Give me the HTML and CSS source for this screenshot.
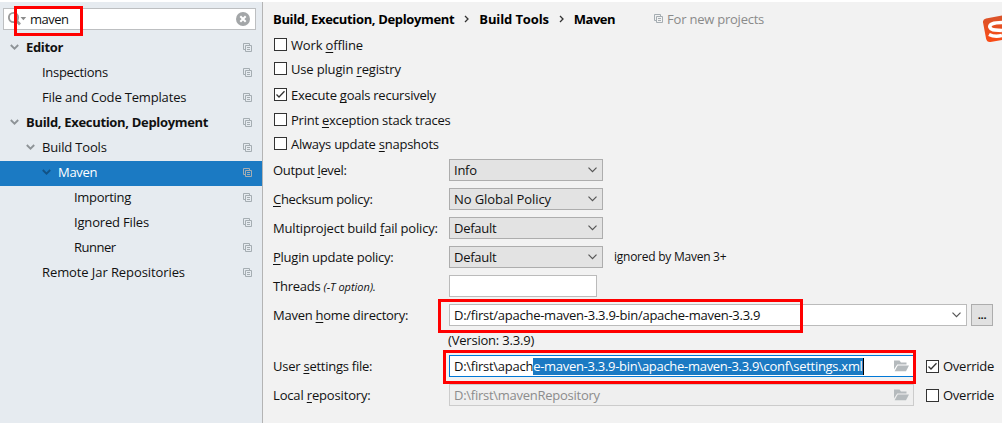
FILE: index.html
```
<!DOCTYPE html>
<html lang="en">
<head>
<meta charset="utf-8">
<title>Settings</title>
<link rel="stylesheet" href="styles.css">
</head>
<body>
<svg class="defs" width="0" height="0">
  <symbol id="copy" viewBox="0 0 9 9"><path d="M2.5 6.5H.5V.5H6.5V2.5M2.5 2.5H8.5V8.5H2.5ZM4 4.5H7M4 6.5H7" fill="none" stroke="currentColor"/></symbol>
  <symbol id="chev" viewBox="0 0 9 6"><path d="M.8 1L4.5 4.6L8.2 1" fill="none" stroke="currentColor" stroke-width="1.9"/></symbol>
  <symbol id="arrow" viewBox="0 0 9 6"><path d="M.5 .7L4.5 4.7L8.5 .7" fill="none" stroke="currentColor" stroke-width="1.2"/></symbol>
  <symbol id="check" viewBox="0 0 11 11"><path d="M1.5 5.5L4 8L9.5 2.2" fill="none" stroke="currentColor" stroke-width="1.3"/></symbol>
  <symbol id="folder" viewBox="0 0 15 12"><path d="M0 9.5V.5H5.5L7 2.5H12.5V4.5H3.2Z" fill="currentColor"/><path d="M3.8 5.5H15L12 11.3H.6Z" fill="currentColor"/></symbol>
</svg>
<div class="window">
  <aside class="sidebar">
    <div class="search">
      <svg class="magnifier" width="20" height="16" viewBox="0 0 20 16"><circle cx="5.500" cy="6.500" r="4.600" fill="none" stroke="#9a9a9a" stroke-width="1.900"/><path d="M8.8 10L12 13.500" stroke="#9a9a9a" stroke-width="2.600"/><path d="M12.500 6H18.2L15.4 9.200Z" fill="#8c8c8c"/></svg>
      <span class="query">maven</span>
      <svg class="clear" width="14" height="14" viewBox="0 0 14 14"><circle cx="7" cy="7" r="7" fill="#a3a6a8"/><path d="M4.3 4.3L9.7 9.7M9.7 4.3L4.3 9.7" stroke="#fff" stroke-width="2"/></svg>
      <div class="mark mark-search"></div>
    </div>
    <nav class="tree">
      <div class="node l0"><svg class="chev"><use href="#chev"/></svg><span class="editor">Editor</span><svg class="copy"><use href="#copy"/></svg></div>
      <div class="node l1 leaf"><span class="tight">Inspections</span><svg class="copy"><use href="#copy"/></svg></div>
      <div class="node l1 leaf"><span>File and Code Templates</span><svg class="copy"><use href="#copy"/></svg></div>
      <div class="node l0"><svg class="chev"><use href="#chev"/></svg><span>Build, Execution, Deployment</span><svg class="copy"><use href="#copy"/></svg></div>
      <div class="node l1"><svg class="chev"><use href="#chev"/></svg><span>Build Tools</span><svg class="copy"><use href="#copy"/></svg></div>
      <div class="node l2 selected"><svg class="chev"><use href="#chev"/></svg><span class="tight">Maven</span><svg class="copy"><use href="#copy"/></svg></div>
      <div class="node l3 leaf"><span class="tight">Importing</span><svg class="copy"><use href="#copy"/></svg></div>
      <div class="node l3 leaf"><span>Ignored Files</span><svg class="copy"><use href="#copy"/></svg></div>
      <div class="node l3 leaf"><span class="runner">Runner</span><svg class="copy"><use href="#copy"/></svg></div>
      <div class="node l1 leaf"><span class="loose">Remote Jar Repositories</span><svg class="copy"><use href="#copy"/></svg></div>
    </nav>
  </aside>
  <main class="content">
    <header class="crumbs">
      <b class="c-build">Build, Execution, Deployment</b>
      <svg class="sep" viewBox="0 0 5 8"><path d="M1 1L4 4L1 7" fill="none" stroke="#333" stroke-width="1.3"/></svg>
      <b class="c-tools">Build Tools</b>
      <svg class="sep" viewBox="0 0 5 8"><path d="M1 1L4 4L1 7" fill="none" stroke="#333" stroke-width="1.3"/></svg>
      <b class="c-maven">Maven</b>
      <span class="scope"><svg class="copy"><use href="#copy"/></svg>For new projects</span>
      <svg class="logo" width="19" height="28" viewBox="0 0 19 28"><defs><linearGradient id="lg" x1="0" y1="0" x2="0" y2="1"><stop offset="0" stop-color="#d9532a"/><stop offset="1" stop-color="#fa4c16"/></linearGradient></defs><path d="M19 .5L3 3.500Q-.5 4.500 0 7.500L3 23.500Q4 27.500 7.500 27L19 25Z" fill="url(#lg)"/><path d="M19 7.500C10 7.500 6 9.500 7 12.500S13 15 19 15.500M19 20.500Q12 22.500 6 19.500" fill="none" stroke="#fff" stroke-width="3.600"/></svg>
    </header>
    <section class="checks">
      <label class="check"><i class="box"></i><span class="loose">Work <u>o</u>ffline</span></label>
      <label class="check"><i class="box"></i><span class="loose">Use plugin <u>r</u>egistry</span></label>
      <label class="check low"><i class="box"><svg><use href="#check"/></svg></i><span>Execute <u>g</u>oals recursively</span></label>
      <label class="check"><i class="box"></i><span>Print <u>e</u>xception stack traces</span></label>
      <label class="check"><i class="box"></i><span>Always update <u>s</u>napshots</span></label>
    </section>
    <section class="form">
      <div class="row"><span class="label tight">Output <u>l</u>evel:</span><div class="select">Info<svg class="arrow"><use href="#arrow"/></svg></div></div>
      <div class="row"><span class="label tight"><u>C</u>hecksum policy:</span><div class="select"><span class="policy">No Global Policy</span><svg class="arrow"><use href="#arrow"/></svg></div></div>
      <div class="row"><span class="label multi">Multiproject build <u>f</u>ail policy:</span><div class="select">Default<svg class="arrow"><use href="#arrow"/></svg></div></div>
      <div class="row"><span class="label"><u>P</u>lugin update policy:</span><div class="select">Default<svg class="arrow"><use href="#arrow"/></svg></div><span class="note">ignored by Maven 3+</span></div>
      <div class="row"><span class="label">Threads <em>(-T option).</em></span><div class="field threads"></div></div>
      <div class="row"><span class="label">Maven <u>h</u>ome directory:</span><div class="field home">D:/first/apache-maven-3.3.9-bin/apache-maven-3.3.9<svg class="arrow"><use href="#arrow"/></svg><div class="mark mark-home"></div></div><div class="browse">...</div></div>
      <div class="version">(Version: 3.3.9)</div>
      <div class="row"><span class="label">User <u>s</u>ettings file:</span><div class="field path focused"><span class="head">D:\first\apach</span><span class="selection">e-maven-3.3.9-bin\apache-maven-3.3.9\conf\settings.xml</span><svg class="folder"><use href="#folder"/></svg><div class="mark mark-user"></div></div><label class="override"><i class="box"><svg><use href="#check"/></svg></i><span>Override</span></label></div>
      <div class="row"><span class="label loose">Local <u>r</u>epository:</span><div class="field path disabled">D:\first\mavenRepository<svg class="folder"><use href="#folder"/></svg></div><label class="override"><i class="box"></i><span>Override</span></label></div>
    </section>
  </main>
</div>
</body>
</html>
```
FILE: styles.css
```
* { box-sizing: border-box; }
body {
  margin: 0;
  width: 1002px;
  height: 423px;
  overflow: hidden;
  background: #fff;
  color: #111;
  font: 13px/18px "Open Sans", "Noto Sans", sans-serif;
  letter-spacing: -0.25px;
  white-space: nowrap;
}
.defs { position: absolute; }
svg { flex: none; display: block; }
u { text-decoration-thickness: 1px; text-underline-offset: 2px; text-decoration-skip-ink: none; }
.tight { letter-spacing: -0.32px; }
.loose { letter-spacing: -0.16px; }
.multi { letter-spacing: -0.19px; }

.window { display: flex; height: 421px; margin-top: 2px; }
.sidebar { width: 263px; flex: none; background: #e6ebf0; border-right: 1px solid #b4b4b4; padding-top: 6px; }
.search {
  position: relative;
  display: flex;
  align-items: center;
  width: 253px;
  height: 22px;
  margin-left: 3px;
  padding: 0 5px 0 4px;
  background: #fff;
  border: 1px solid #bdbfc1;
}
.query { flex: 1; margin-left: 2px; letter-spacing: -0.5px; }
.mark { position: absolute; border: 3px solid #f00; pointer-events: none; }
.mark-search { left: 10px; top: -3px; width: 69px; height: 30px; }

.tree { margin-top: 6px; }
.node { display: flex; align-items: center; height: 25px; padding-right: 10px; padding-bottom: 3px; letter-spacing: -0.17px; }
.node span { flex: 1; }
.node .tight { letter-spacing: -0.3px; }
.node .loose { letter-spacing: -0.09px; }
.node .runner { letter-spacing: -0.5px; }
.node .chev { width: 9px; height: 6px; margin-right: 7px; color: #8e9397; }
.l0 { padding-left: 10px; font-weight: 700; letter-spacing: -0.32px; }
.l1 { padding-left: 26px; }
.l2 { padding-left: 42px; }
.l3 { padding-left: 58px; }
.leaf span { margin-left: 16px; }
.copy { width: 9px; height: 9px; color: #a5adb2; }
.selected { background: #1b7ac3; color: #fff; }
.selected .chev { color: #125285; }

.content { flex: 1; background: #f2f2f2; padding-left: 11px; }
.crumbs { display: flex; align-items: center; height: 33px; margin-left: -1px; position: relative; }
.crumbs b { color: #000; letter-spacing: -0.35px; }
.crumbs .c-tools { letter-spacing: -0.12px; }
.crumbs .c-maven { letter-spacing: -0.5px; }
.sep { width: 5px; height: 8px; margin: 0 10px; }
.scope { display: flex; align-items: center; gap: 4px; margin-left: 39px; color: #8a8a8a; letter-spacing: -0.23px; }
.logo { position: absolute; right: 0; top: 13px; }

.checks { display: flex; flex-direction: column; gap: 5px; }
.check { display: flex; align-items: center; height: 19px; gap: 4px; }
.low { margin: 2px 0 1px; }
.box { display: block; width: 13px; height: 13px; flex: none; background: #fff; border: 1px solid #333; }
.box svg { width: 11px; height: 11px; color: #333; }

.form { display: flex; flex-direction: column; gap: 7px; margin-left: -1px; margin-top: 6px; }
.row { display: flex; height: 22px; align-items: center; }
.label { width: 176px; flex: none; }
.label em { font-size: 11px; letter-spacing: 0; }
.select, .field { position: relative; display: flex; align-items: center; height: 22px; padding-left: 4px; border: 1px solid #adadad; background: #e3e3e3; }
.select { width: 154px; }
.policy { letter-spacing: -0.08px; }
.arrow { width: 9px; height: 6px; margin: 0 5px 0 auto; color: #555; }
.note { margin-left: 11px; font-size: 12px; }
.field { background: #fff; border-color: #bbb; letter-spacing: -0.26px; }
.threads { width: 148px; }
.home { width: 518px; }
.browse { width: 22px; height: 22px; margin-left: 4px; border: 1px solid #adadad; background: #e1e1e1; text-align: center; font-weight: 700; font-size: 11px; line-height: 20px; }
.path { width: 465px; }
.folder { width: 15px; height: 12px; margin: 0 4px 0 auto; color: #b5babd; }
.focused { border-color: #0078d7; }
.selection { height: 17px; line-height: 17px; background: #1b7ac3; color: #fff; border-right: 1px solid #000; letter-spacing: -0.29px; }
.disabled { background: #efefef; border-color: #ccc; color: #8c8c8c; }
.override { display: flex; align-items: center; gap: 4px; margin-left: 12px; }
.mark-home { left: -12px; top: -6px; width: 365px; height: 34px; }
.mark-user { left: -7px; top: -6px; width: 473px; height: 34px; }
.version { height: 15px; line-height: 15px; margin-left: 175px; letter-spacing: -0.2px; }
```
